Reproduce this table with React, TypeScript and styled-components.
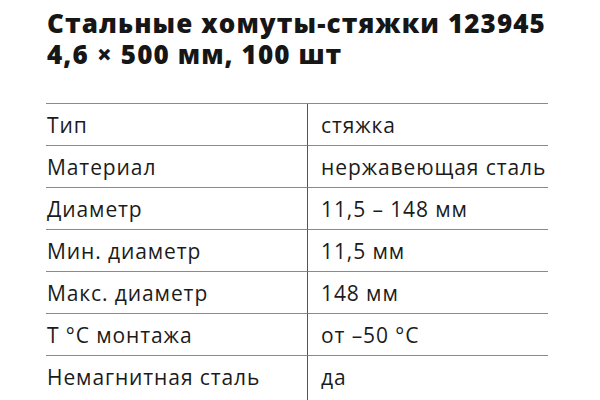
import React from 'react';
import styled, { createGlobalStyle } from 'styled-components';

const GlobalStyle = createGlobalStyle`
  body {
    margin: 0;
    background: #ffffff;
    font-family: "Open Sans", "Liberation Sans", sans-serif;
    color: #1b1b1b;
  }
`;

const Page = styled.div`
  width: 600px;
  height: 400px;
  overflow: hidden;
  padding: 8px 52px 0 46px;
  box-sizing: border-box;
`;

const Title = styled.h1`
  margin: 0 0 33px 1px;
  font-size: 26px;
  line-height: 31px;
  font-weight: 800;
  letter-spacing: 1.1px;
  color: #161616;
  white-space: nowrap;
`;

const Table = styled.div`
  display: grid;
  grid-template-columns: 261px 1fr;
  border-top: 1px solid #8a8a8a;
`;

const Row = styled.div<{ $last?: boolean }>`
  display: contents;

  & > div {
    box-sizing: border-box;
    height: ${p => (p.$last ? 48 : 42)}px;
    padding-bottom: ${p => (p.$last ? 6 : 0)}px;
    border-bottom: ${p => (p.$last ? 'none' : '1px solid #8a8a8a')};
  }
`;

const Cell = styled.div<{ $value?: boolean }>`
  display: flex;
  align-items: center;
  font-size: 21px;
  letter-spacing: 0.9px;
  color: #1b1b1b;
  padding-left: ${p => (p.$value ? '13px' : '1px')};
  border-left: ${p => (p.$value ? '1px solid #555' : 'none')};
  white-space: nowrap;
`;

const specs: [string, string][] = [
  ['Тип', 'стяжка'],
  ['Материал', 'нержавеющая сталь'],
  ['Диаметр', '11,5 – 148 мм'],
  ['Мин. диаметр', '11,5 мм'],
  ['Макс. диаметр', '148 мм'],
  ['T °C монтажа', 'от –50 °C'],
  ['Немагнитная сталь', 'да'],
];

export default function App() {
  return (
    <Page>
      <GlobalStyle />
      <Title>
        Стальные хомуты-стяжки 123945
        <br />
        4,6 × 500 мм, 100 шт
      </Title>
      <Table>
        {specs.map(([label, value], i) => (
          <Row key={label} $last={i === specs.length - 1}>
            <Cell>{label}</Cell>
            <Cell $value>{value}</Cell>
          </Row>
        ))}
      </Table>
    </Page>
  );
}
